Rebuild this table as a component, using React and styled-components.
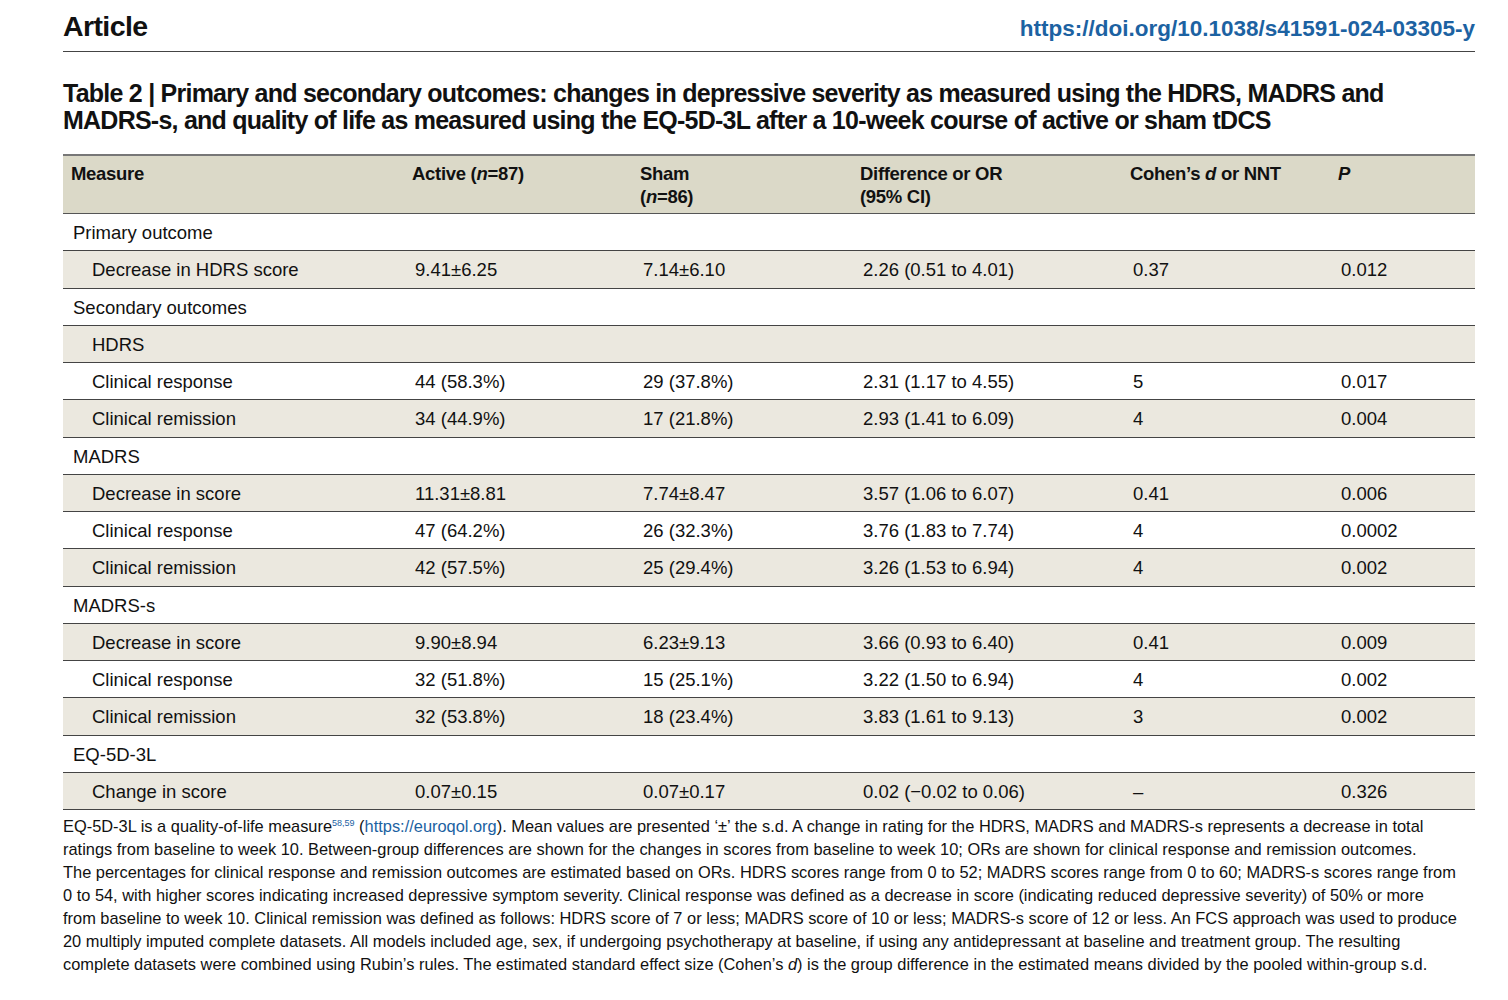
import React from "react";
import styled, { createGlobalStyle } from "styled-components";

const GlobalStyle = createGlobalStyle`
  html, body { margin: 0; padding: 0; background: #ffffff; }
  body { font-family: "Liberation Sans", Arial, sans-serif; color: #111; }
  * { box-sizing: border-box; }
`;

const Page = styled.div`
  width: 1508px;
  padding: 0 33px 0 63px;
`;

const TopBar = styled.header`
  display: flex;
  justify-content: space-between;
  align-items: center;
  height: 52px;
  border-bottom: 1px solid #444;
  padding-top: 2px;
`;

const Brand = styled.div`
  font-family: "Liberation Sans", Arial, sans-serif;
  font-weight: 700;
  font-size: 28.5px;
  letter-spacing: -0.6px;
  color: #111;
`;

const Doi = styled.a`
  font-family: "Liberation Sans", Arial, sans-serif;
  font-weight: 700;
  font-size: 22.5px;
  letter-spacing: 0;
  color: #1c62a2;
  text-decoration: none;
  margin-top: 4px;
`;

const Title = styled.h1`
  margin: 28px 0 0 0;
  font-family: "Liberation Sans", Arial, sans-serif;
  font-weight: 700;
  font-size: 25px;
  line-height: 27px;
  letter-spacing: -0.76px;
  color: #111;
`;

const Table = styled.div`
  margin-top: 20px;
  border-top: 2px solid #777;
`;

const cols = "349px 228px 220px 270px 208px 1fr";

const HeadRow = styled.div`
  display: grid;
  grid-template-columns: ${cols};
  height: 58px;
  background: #dbd9c8;
  border-bottom: 1px solid #555;
  padding-top: 6px;
`;

const HeadCell = styled.div`
  font-weight: 700;
  font-size: 18.5px;
  line-height: 23px;
  letter-spacing: -0.3px;
  padding-left: ${(p) => (p.$first ? "8px" : "0")};
`;

const Row = styled.div`
  display: grid;
  grid-template-columns: ${cols};
  align-items: center;
  height: 37.25px;
  background: ${(p) => (p.$shaded ? "#ebe8df" : "#ffffff")};
  border-bottom: 1px solid #444;
`;

const Cell = styled.div`
  font-size: 18.5px;
  letter-spacing: 0;
  padding-left: 3px;
  padding-top: 2px;
  white-space: nowrap;
`;

const Label = styled(Cell)`
  padding-left: ${(p) => (p.$indent ? "29px" : "10px")};
`;

const Notes = styled.p`
  margin: 5px 0 0 0;
  font-size: 16.4px;
  line-height: 23px;
  letter-spacing: 0;
  color: #111;
  white-space: nowrap;
`;

const Link = styled.a`
  color: #1c62a2;
  text-decoration: none;
`;

const Sup = styled.sup`
  font-size: 9px;
  color: #1c62a2;
  vertical-align: 6px;
  line-height: 0;
  letter-spacing: 0;
`;

const rows = [
  { label: "Primary outcome" },
  { label: "Decrease in HDRS score", indent: true, v: ["9.41±6.25", "7.14±6.10", "2.26 (0.51 to 4.01)", "0.37", "0.012"] },
  { label: "Secondary outcomes" },
  { label: "HDRS", indent: true },
  { label: "Clinical response", indent: true, v: ["44 (58.3%)", "29 (37.8%)", "2.31 (1.17 to 4.55)", "5", "0.017"] },
  { label: "Clinical remission", indent: true, v: ["34 (44.9%)", "17 (21.8%)", "2.93 (1.41 to 6.09)", "4", "0.004"] },
  { label: "MADRS" },
  { label: "Decrease in score", indent: true, v: ["11.31±8.81", "7.74±8.47", "3.57 (1.06 to 6.07)", "0.41", "0.006"] },
  { label: "Clinical response", indent: true, v: ["47 (64.2%)", "26 (32.3%)", "3.76 (1.83 to 7.74)", "4", "0.0002"] },
  { label: "Clinical remission", indent: true, v: ["42 (57.5%)", "25 (29.4%)", "3.26 (1.53 to 6.94)", "4", "0.002"] },
  { label: "MADRS-s" },
  { label: "Decrease in score", indent: true, v: ["9.90±8.94", "6.23±9.13", "3.66 (0.93 to 6.40)", "0.41", "0.009"] },
  { label: "Clinical response", indent: true, v: ["32 (51.8%)", "15 (25.1%)", "3.22 (1.50 to 6.94)", "4", "0.002"] },
  { label: "Clinical remission", indent: true, v: ["32 (53.8%)", "18 (23.4%)", "3.83 (1.61 to 9.13)", "3", "0.002"] },
  { label: "EQ-5D-3L" },
  { label: "Change in score", indent: true, v: ["0.07±0.15", "0.07±0.17", "0.02 (\u22120.02 to 0.06)", "\u2013", "0.326"] },
];

export default function App() {
  return (
    <>
      <GlobalStyle />
      <Page>
        <TopBar>
          <Brand>Article</Brand>
          <Doi href="#">https://doi.org/10.1038/s41591-024-03305-y</Doi>
        </TopBar>
        <Title>
          Table 2 | Primary and secondary outcomes: changes in depressive severity as measured using the HDRS, MADRS and
          <br />
          MADRS-s, and quality of life as measured using the EQ-5D-3L after a 10-week course of active or sham tDCS
        </Title>
        <Table>
          <HeadRow>
            <HeadCell $first>Measure</HeadCell>
            <HeadCell>
              Active (<i>n</i>=87)
            </HeadCell>
            <HeadCell>
              Sham
              <br />(<i>n</i>=86)
            </HeadCell>
            <HeadCell>
              Difference or OR
              <br />
              (95% CI)
            </HeadCell>
            <HeadCell>
              Cohen’s <i>d</i> or NNT
            </HeadCell>
            <HeadCell>
              <i>P</i>
            </HeadCell>
          </HeadRow>
          {rows.map((r, i) => (
            <Row key={i} $shaded={i % 2 === 1}>
              <Label $indent={r.indent}>{r.label}</Label>
              {(r.v || ["", "", "", "", ""]).map((v, j) => (
                <Cell key={j}>{v}</Cell>
              ))}
            </Row>
          ))}
        </Table>
        <Notes>
          EQ-5D-3L is a quality-of-life measure<Sup>58,59</Sup> (<Link href="#">https://euroqol.org</Link>). Mean values are presented ‘±’ the s.d. A change in rating for the HDRS, MADRS and MADRS-s represents a decrease in total
          <br />
          ratings from baseline to week 10. Between-group differences are shown for the changes in scores from baseline to week 10; ORs are shown for clinical response and remission outcomes.
          <br />
          The percentages for clinical response and remission outcomes are estimated based on ORs. HDRS scores range from 0 to 52; MADRS scores range from 0 to 60; MADRS-s scores range from
          <br />
          0 to 54, with higher scores indicating increased depressive symptom severity. Clinical response was defined as a decrease in score (indicating reduced depressive severity) of 50% or more
          <br />
          from baseline to week 10. Clinical remission was defined as follows: HDRS score of 7 or less; MADRS score of 10 or less; MADRS-s score of 12 or less. An FCS approach was used to produce
          <br />
          20 multiply imputed complete datasets. All models included age, sex, if undergoing psychotherapy at baseline, if using any antidepressant at baseline and treatment group. The resulting
          <br />
          complete datasets were combined using Rubin’s rules. The estimated standard effect size (Cohen’s <i>d</i>) is the group difference in the estimated means divided by the pooled within-group s.d.
        </Notes>
      </Page>
    </>
  );
}
